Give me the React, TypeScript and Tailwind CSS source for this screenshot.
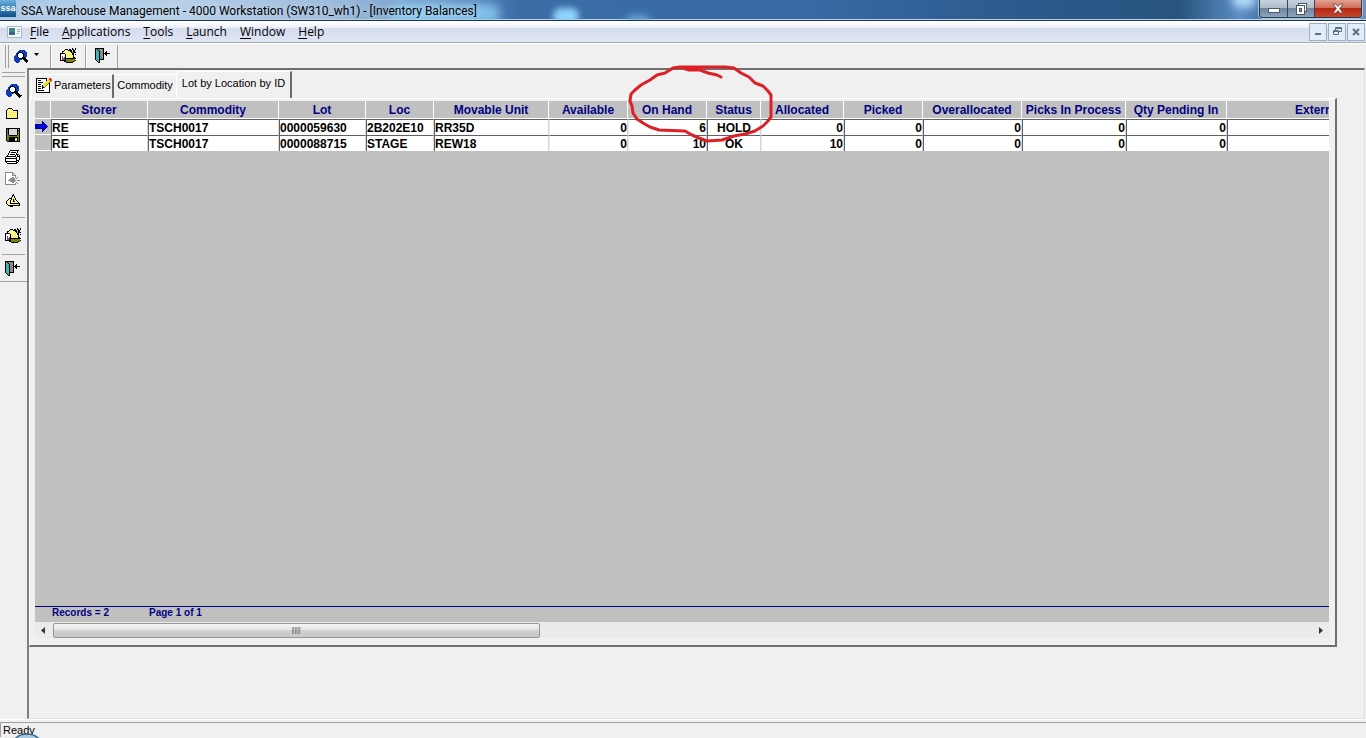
import React from "react";

const palette: Record<string, string> = {
  k: "#000000",
  b: "#1248d0",
  d: "#0a2c9c",
  w: "#ffffff",
  y: "#fff88c",
  Y: "#f0dc3c",
  o: "#808000",
  t: "#48b0b4",
  g: "#8a8a8a",
  l: "#d8d8d8",
  p: "#8040a0",
  r: "#e03020",
  n: "#0000e0",
  m: "#000098",
};

function Pixels({ rows }: { rows: string[] }) {
  const width = Math.max(...rows.map((r) => r.length));
  return (
    <svg
      width={width}
      height={rows.length}
      viewBox={`0 0 ${width} ${rows.length}`}
      shapeRendering="crispEdges"
      aria-hidden="true"
      className="shrink-0"
    >
      {rows.flatMap((row, y) =>
        row.split("").map((c, x) =>
          palette[c] ? <rect key={`${x}-${y}`} x={x} y={y} width="1" height="1" fill={palette[c]} /> : null
        )
      )}
    </svg>
  );
}

const findIcon = [
  ".....bdbdbd....",
  "....bbdbdbdb...",
  "...bdkkkbbdbd..",
  "..bdkwwwkdbdb..",
  "..dkwwwwwkbdb..",
  ".bbkwwwwwkdbd..",
  "bdbkwwwwwkbdb..",
  "bbdbkwwwkkkd...",
  "bdbdbkkkkkkk...",
  "bbdbdbdb.kkkk..",
  "bdbdbb....kkkk.",
  ".bdbdb.....kkk.",
  "..bdb.......k..",
];

const findMenuIcon = [
  ".....bdbdbd.....",
  "....bbdbdbdb....",
  "...bdkkkbbdbd...",
  "..bdkwwwkdbdb...",
  "..dkwwwwwkbdb...",
  ".bbkwwwwwkdbd...",
  "bdbkwwwwwkbdb...",
  "bbdbkwwwkkkd....",
  "bdbdbkkkkkkk....",
  "bbdbdbdb.kkkk...",
  "bdbdbb....kkkk..",
  ".bdbdb.....kkkkk",
  "..bdb.......kkk.",
  ".............k..",
];

const folderIcon = [
  "..kkkk......",
  ".kyyyyk.....",
  "kyyyyyykkkkk",
  "kyyyyyyyyyyk",
  "kyyYyYyYyYyk",
  "kyyyyyyyyyyk",
  "kyYyYyYyYyyk",
  "kyyyyyyyyyyk",
  "kyyYyYyYyYyk",
  "kyyyyyyyyyyk",
  "kkkkkkkkkkkk",
];

const saveIcon = [
  "kkkkkkkkkkkkkk",
  "kokllllllllklk",
  "kokllllllllkkk",
  "kokllllllllkok",
  "kokllllllllkok",
  "kokllllllllkok",
  "kokllllllllkok",
  "kookkkkkkkkook",
  "kooooooooooook",
  "kookkkkkkkkkok",
  "kookkkkkkllkok",
  "kookkkkkkllkok",
  "kookkkkkkllkok",
  ".kkkkkkkkkkkkk",
];

const printIcon = [
  ".....kkkkkkkkk.",
  "....kwwwwwwwk..",
  "....kwkkkkkwk..",
  "...kwwwwwwwk...",
  "...kwkkkkkwkkk.",
  "..kwwwwwwwkwkwk",
  ".kkkkkkkkkkwkkk",
  "kwwwwwwwwwwkwwk",
  "kkkkkkkkkkkkwwk",
  "kwwwwwwyywwkwwk",
  "kwwwwwwwwwwkkk.",
  "kkkkkkkkkkkkwk.",
  ".kwwwwwwwwwkk..",
  "..kkkkkkkkkk...",
];

const previewIcon = [
  "gggggggg.......",
  "gwwwwwwgg......",
  "gwwwwwwgwg.....",
  "gwwwwwwgggg....",
  "gwwwwwwwwwg....",
  "gwwwwwwggwg.g..",
  "gwwwwggggg.g...",
  "gwwwgggggg.....",
  "gwwgggggggg.ggg",
  "gwwwwggggg.....",
  "gwwwwwwgg..g...",
  "gwwwwwwwwwg.g..",
  "ggggggggggg....",
];

const designIcon = [
  ".......k......",
  "......kk......",
  "......kyk.....",
  ".....kyyk.....",
  "...kkkyyyk....",
  "..kyykykyk....",
  ".kyykyykyyk...",
  "kyyykyykkyyk..",
  "kyyykyyyyyyyk.",
  "kyyykkkkkkkkkk",
  ".kyyyyyyyyyyyk",
  "..kkkkkkkkkkkk",
  "....kkk.......",
];

const basketIcon = [
  "............k..k",
  ".....kkk.kk.kk.k",
  "....kyyykkkk.kk.",
  "..kkyyyyyykktkk.",
  "..kyyyyyyyyktkkk",
  "kkkkkyyyyyyykk..",
  "kwwwwkyyyyyykk.k",
  "kwwwwkyyyyyyyk..",
  "kwpwwkyyyyyyyk..",
  "kwpwbkyyYyYyYkk.",
  "kwprbkkkkkkkkkkk",
  "kwprbkooooooooo.",
  "kkkkkkoooooooook",
  "....kkoooooooko.",
  "......kkkkkkk...",
];

const doorIcon = [
  "kkkkkkkkk......",
  "ktkgggggk......",
  "kttkggggk......",
  "ktttkgggk..k...",
  "ktttkgggk.kk...",
  "ktttkgggkkkkkkk",
  "ktttkgggk.kk...",
  "ktttkgggk..k...",
  "ktttkgggk......",
  "ktttkgggk......",
  "ktttkgggk......",
  "ktttkkkkk......",
  ".kttk..........",
  "..ktk..........",
  "...kk..........",
];

const notepadIcon = [
  "kkkkkkkkkkk..rr.",
  "kwwwwwwwwwk.Yrrr",
  "kwkkkwwwwwkYYYrr",
  "kwwwwwwwwwYYYYo.",
  "kwkkkkkwwYYYYo..",
  "kwwwwwwwYYYYok..",
  "kwkkkwwYYYYowk..",
  "kwwwwwkYYYowwk..",
  "kwkkkwkYYowwwk..",
  "kwwwwwkkowwwwk..",
  "kwkkkwkwwwwwwk..",
  "kwwwwwwwwwwwwk..",
  "kwkkkkkkwwwwwk..",
  "kwwwwwwwwwwwwk..",
  "kkkkkkkkkkkkkk..",
];

const arrowIcon = [
  ".......m......",
  ".......mm.....",
  ".......mnm....",
  "mmmmmmmmnnm...",
  "nnnnnnnnnnnm..",
  "nnnnnnnnnnnnm.",
  "nnnnnnnnnnnm..",
  "mmmmmmmmnnm...",
  ".......mnm....",
  ".......mm.....",
  ".......m......",
];

const menus = ["File", "Applications", "Tools", "Launch", "Window", "Help"];

type Column = { name: string; width: string; align: string; edge: string };

const dark = "border-l-[#606060]";
const light = "border-l-[#e8e8e8]";

const columns: Column[] = [
  { name: "Storer", width: "w-[97px]", align: "text-left", edge: dark },
  { name: "Commodity", width: "w-[131px]", align: "text-left", edge: dark },
  { name: "Lot", width: "w-[87px]", align: "text-left", edge: dark },
  { name: "Loc", width: "w-[68px]", align: "text-left", edge: dark },
  { name: "Movable Unit", width: "w-[115px]", align: "text-left", edge: dark },
  { name: "Available", width: "w-[79px]", align: "text-right", edge: light },
  { name: "On Hand", width: "w-[79px]", align: "text-right", edge: light },
  { name: "Status", width: "w-[54px]", align: "text-center", edge: dark },
  { name: "Allocated", width: "w-[83px]", align: "text-right", edge: light },
  { name: "Picked", width: "w-[79px]", align: "text-right", edge: dark },
  { name: "Overallocated", width: "w-[99px]", align: "text-right", edge: dark },
  { name: "Picks In Process", width: "w-[104px]", align: "text-right", edge: dark },
  { name: "Qty Pending In", width: "w-[101px]", align: "text-right", edge: dark },
];

const records = [
  ["RE", "TSCH0017", "0000059630", "2B202E10", "RR35D", "0", "6", "HOLD", "0", "0", "0", "0", "0"],
  ["RE", "TSCH0017", "0000088715", "STAGE", "REW18", "0", "10", "OK", "10", "0", "0", "0", "0"],
];

function TitleBar() {
  return (
    <header className="relative flex h-[21px] shrink-0 items-center overflow-hidden border-b border-[#1d3550] bg-[linear-gradient(90deg,#a9c8e6_0px,#b5cfe8_180px,#9dbcdc_330px,#6f9ac8_440px,#3a6ca6_520px,#386ba6_800px,#2b5a8c_1020px,#29547f_1180px,#5b8dc4_1240px,#38669b_1280px,#6f93ba_100%)] shadow-[inset_0_-1px_0_#b9d0e6]">
      <div className="absolute top-1 left-[390px] h-5 w-[110px] rounded-full bg-[#8fd0f5] opacity-80 blur-[5px]" />
      <div className="absolute top-2 left-[553px] h-4 w-[26px] rounded-full bg-[#8fd4fb] blur-[3px]" />
      <div className="absolute top-4 left-[626px] h-3 w-6 rounded-full bg-[#6fb0e0] blur-[4px]" />
      <div className="absolute -top-2 left-[1232px] h-4 w-6 rounded-full bg-[#b4d8fa] blur-[4px]" />
      <span className="relative flex h-[17px] w-4 justify-center self-start bg-gradient-to-b from-[#6ab0dc] to-[#0a4f86] font-['Liberation_Sans',sans-serif] text-[9px] leading-[16px] font-bold text-white">
        ssa
      </span>
      <h1 className="relative ml-[5px] pt-px font-['Roboto',sans-serif] text-[12px] whitespace-nowrap [text-shadow:0_0_6px_#ffffffb0]">
        SSA Warehouse Management - 4000 Workstation (SW310_wh1) - [Inventory Balances]
      </h1>
      <div className="relative mr-[4px] ml-auto flex h-[18px] self-start overflow-hidden rounded-b-[4px] border border-t-0 border-[#263a50] shadow-[0_0_0_1px_#a9c3dc]">
        <button aria-label="Minimize" className="flex w-[28px] items-center justify-center border-r border-[#33475c] bg-[linear-gradient(#c7d2de_0,#aebccb_45%,#71869d_50%,#8ba3bc_100%)]">
          <svg width="12" height="5" aria-hidden="true" className="mt-1">
            <rect x=".5" y=".5" width="11" height="4" fill="#fff" stroke="#4e5967" />
          </svg>
        </button>
        <button aria-label="Restore" className="flex w-[27px] items-center justify-center border-r border-[#33475c] bg-[linear-gradient(#c7d2de_0,#aebccb_45%,#71869d_50%,#8ba3bc_100%)]">
          <svg width="13" height="12" aria-hidden="true">
            <rect x="3.5" y=".5" width="8" height="8" fill="#fff" stroke="#4e5967" />
            <rect x="1.5" y="2.5" width="8" height="9" fill="#fff" stroke="#4e5967" />
            <rect x="4.5" y="5.5" width="2" height="3" fill="#8798aa" stroke="#4e5967" />
          </svg>
        </button>
        <button aria-label="Close" className="flex w-[46px] items-center justify-center bg-[linear-gradient(#e3a294_0,#d16d58_45%,#b52912_50%,#c8452c_100%)]">
          <svg width="12" height="11" aria-hidden="true">
            <path d="M1 1h3l2 2.5L8 1h3L7.6 5.5 11 10H8L6 7.5 4 10H1l3.4-4.5z" fill="#fff" stroke="#5c4048" strokeWidth=".8" />
          </svg>
        </button>
      </div>
    </header>
  );
}

function MenuBar() {
  const child =
    "flex h-[18px] w-[18px] items-center justify-center border border-[#9dafbf] bg-[#e1eefa] text-[#5b6f85]";
  return (
    <nav className="flex h-[22px] shrink-0 items-center border-b border-[#a4a8b4] bg-[linear-gradient(#ffffff_0,#eff3fa_30%,#d5dcee_36%,#dfe5f5_100%)]">
      <svg width="15" height="12" className="ml-[7px]" aria-hidden="true">
        <rect x=".5" y=".5" width="14" height="11" fill="#f4f8f8" stroke="#a9bcc4" />
        <rect x="2" y="2" width="6" height="7" fill="#3d8a7c" />
        <rect x="2" y="6" width="6" height="3" fill="#3b648c" />
        <path d="M10 3.5h3M10 5.5h3M10 7.5h2" stroke="#9aa" />
      </svg>
      <div className="ml-2 flex gap-[13px] text-[12px]">
        {menus.map((name) => (
          <button key={name} className="leading-[18px]">
            <span className="underline underline-offset-2">{name[0]}</span>
            {name.slice(1)}
          </button>
        ))}
      </div>
      <div className="mr-px ml-auto flex gap-px">
        <button aria-label="Minimize child window" className={child}>
          <svg width="7" height="10" aria-hidden="true"><rect y="6" width="6" height="2" fill="currentColor" /></svg>
        </button>
        <button aria-label="Restore child window" className={child}>
          <svg width="9" height="9" aria-hidden="true" fill="none" stroke="currentColor">
            <path d="M2.5 3V.5h6v4H6M2.5 1.5h6M.5 3.5h5v4h-5zM.5 4.5h5" />
          </svg>
        </button>
        <button aria-label="Close child window" className={child}>
          <svg width="8" height="8" aria-hidden="true"><path d="M1 1l6 6M7 1L1 7" stroke="currentColor" strokeWidth="2" /></svg>
        </button>
      </div>
    </nav>
  );
}

function ToolBar() {
  return (
    <div className="flex h-[25px] shrink-0 items-stretch border-t border-white pt-px">
      <div className="ml-[5px] w-[4px] border-x border-[#a0a0a0]" />
      <button aria-label="Find" className="ml-[5px] flex w-[37px] items-center gap-[5px] border-r border-[#a0a0a0]">
        <Pixels rows={findIcon} />
        <svg width="5" height="3" className="mb-1" aria-hidden="true"><path d="M0 0h5L2.5 3z" /></svg>
      </button>
      <button aria-label="Open inventory" className="flex w-[35px] items-center border-r border-l border-r-[#a0a0a0] border-l-white pb-[2px] pl-2">
        <Pixels rows={basketIcon} />
      </button>
      <button aria-label="Exit" className="flex w-[32px] items-center border-r border-l border-r-[#a0a0a0] border-l-white pb-[2px] pl-2">
        <Pixels rows={doorIcon} />
      </button>
    </div>
  );
}

function SideBar() {
  return (
    <aside className="w-[27px] shrink-0">
      <div className="flex h-[214px] flex-col items-start border-b border-[#a0a0a0] pt-1">
        <div className="ml-[2px] h-[5px] w-[23px] shrink-0 border-y border-[#a0a0a0]" />
        <button aria-label="Find" className="mt-[3px] ml-[6px] flex h-[23px] items-center"><Pixels rows={findMenuIcon} /></button>
        <button aria-label="Open" className="ml-[6px] flex h-[21px] items-center"><Pixels rows={folderIcon} /></button>
        <button aria-label="Save" className="ml-[6px] flex h-[22px] items-center"><Pixels rows={saveIcon} /></button>
        <button aria-label="Print" className="ml-[5px] flex h-[22px] items-center"><Pixels rows={printIcon} /></button>
        <button aria-label="Preview" className="ml-[5px] flex h-[22px] items-center"><Pixels rows={previewIcon} /></button>
        <button aria-label="Design" className="ml-[6px] flex h-[22px] items-center"><Pixels rows={designIcon} /></button>
        <div className="mt-[6px] ml-[2px] h-px w-[23px] shrink-0 bg-[#a0a0a0]" />
        <button aria-label="Open inventory" className="ml-[5px] flex h-[36px] items-center pb-[2px]"><Pixels rows={basketIcon} /></button>
        <div className="ml-[2px] h-px w-[23px] shrink-0 bg-[#a0a0a0]" />
        <button aria-label="Exit" className="ml-[5px] flex h-[26px] items-center"><Pixels rows={doorIcon} /></button>
      </div>
    </aside>
  );
}

function Tabs() {
  return (
    <div role="tablist" className="flex h-[28px] shrink-0 items-end pl-[2px] text-[11px]">
      <button role="tab" aria-selected="false" className="flex h-[24px] w-[83px] items-center gap-[2px] rounded-tl-sm border-t border-r-2 border-l border-t-white border-r-[#6a6a6a] border-l-white pb-[3px] pl-[4px] whitespace-nowrap">
        <Pixels rows={notepadIcon} />
        Parameters
      </button>
      <button role="tab" aria-selected="false" className="flex h-[24px] w-[62px] items-center justify-center border-t border-white pb-[2px] whitespace-nowrap">
        Commodity
      </button>
      <button role="tab" aria-selected="true" className="flex h-[27px] w-[116px] items-center justify-center rounded-tl-sm border-t border-r-2 border-l border-t-white border-r-[#6a6a6a] border-l-white pb-[3px] whitespace-nowrap">
        Lot by Location by ID
      </button>
    </div>
  );
}

function Grid() {
  return (
    <table className="w-full table-fixed border-separate border-spacing-0 text-[12px] leading-[14px] font-bold">
      <thead>
        <tr className="h-[18px] text-[#000080]">
          <th aria-label="Current row" className="w-[16px] border-r border-b border-white p-0" />
          {columns.map((c) => (
            <th key={c.name} className={`${c.width} border-r border-b border-white p-0 whitespace-nowrap`}>{c.name}</th>
          ))}
          <th className="overflow-hidden border-b border-white p-0 pl-[68px] text-left whitespace-nowrap">Extern</th>
        </tr>
      </thead>
      <tbody>
        {records.map((row, i) => (
          <tr key={row[2]} className="h-[16px]">
            <td className="border-b border-white p-0">{i === 0 && <Pixels rows={arrowIcon} />}</td>
            {row.map((value, j) => (
              <td
                key={columns[j].name}
                className={`${columns[j].align} ${columns[j].edge} border-t border-r border-l border-t-[#606060] border-r-[#d8d8d8] bg-white p-0 whitespace-nowrap`}
              >
                {value}
              </td>
            ))}
            <td className="border-t border-l border-[#606060] bg-white p-0" />
          </tr>
        ))}
      </tbody>
    </table>
  );
}

function ScrollBar() {
  return (
    <div className="flex h-[16px] shrink-0 items-center bg-[#ebebeb] px-[6px]">
      <svg width="4" height="7" aria-hidden="true"><path d="M4 0v7L0 3.5z" fill="#333" /></svg>
      <div className="ml-2 flex h-[15px] w-[38%] items-center justify-center gap-px rounded-[2px] border border-[#979797] bg-[linear-gradient(#f4f4f4_0,#e6e6e6_45%,#d2d2d5_50%,#c6c6ca_100%)]">
        <svg width="9" height="7" aria-hidden="true"><path d="M1 0v7M4 0v7M7 0v7" stroke="#555" /><path d="M2 0v7M5 0v7M8 0v7" stroke="#aaa" /></svg>
      </div>
      <svg width="4" height="7" className="ml-auto" aria-hidden="true"><path d="M0 0v7l4-3.5z" fill="#333" /></svg>
    </div>
  );
}

export default function App() {
  return (
    <div className="relative flex h-screen flex-col overflow-hidden bg-[#f0f0f0] font-['Liberation_Sans',sans-serif] text-black">
      <div className="shrink-0 font-['Open_Sans',sans-serif]">
        <TitleBar />
        <MenuBar />
      </div>
      <ToolBar />
      <div className="flex min-h-0 flex-1">
        <SideBar />
        <main className="mr-px flex min-w-0 flex-1 flex-col border-t-2 border-r border-b border-l-2 border-t-[#707070] border-r-[#e0e0e0] border-b-[#e0e0e0] border-l-[#808080] pr-[27px] pb-[71px]">
          <Tabs />
          <section className="flex min-h-0 flex-1 flex-col border-t border-r-2 border-b-2 border-l border-t-white border-r-[#707070] border-b-[#707070] border-l-white pt-[2px] pr-[6px] pb-[7px] pl-[5px]">
            <div className="min-h-0 flex-1 overflow-hidden bg-[#c0c0c0]">
              <Grid />
            </div>
            <div className="flex h-[16px] shrink-0 border-t border-[#000080] bg-[#c0c0c0] pl-[17px] text-[10px] leading-[12px] font-bold text-[#000080]">
              <span className="w-[97px]">Records = 2</span>
              <span>Page 1 of 1</span>
            </div>
            <ScrollBar />
          </section>
        </main>
      </div>
      <footer className="h-[19px] shrink-0 border-t border-white pt-[2px]">
        <div className="border-t border-l border-[#a0a0a0] pl-[2px] text-[11px] leading-[14px]">Ready</div>
      </footer>
      <svg className="pointer-events-none absolute bottom-0 left-[12px]" width="30" height="5" aria-hidden="true">
        <ellipse cx="15" cy="13" rx="15" ry="12" fill="#a9c9e2" stroke="#3a6788" strokeWidth="1.5" />
      </svg>
      <svg
        className="pointer-events-none absolute top-[60px] left-[600px]"
        width="180"
        height="90"
        fill="none"
        stroke="#dd2028"
        strokeWidth="3"
        strokeLinecap="round"
        strokeLinejoin="round"
        aria-hidden="true"
      >
        <path d="M121 17L117 15 108 13 100 10 89 10 80 7 73 8 65 13 57 15 50 20 41 25 35 30 31 34 30 41 32 46 33 53 37 59 43 63 50 67 59 70 85 71 92 75 99 78 107 81 122 80 134 76 145 74 155 71 163 66 168 61 171 57 171 35 168 31 163 26 155 23 149 17 141 13 134 8 125 7 80 7" />
      </svg>
    </div>
  );
}
